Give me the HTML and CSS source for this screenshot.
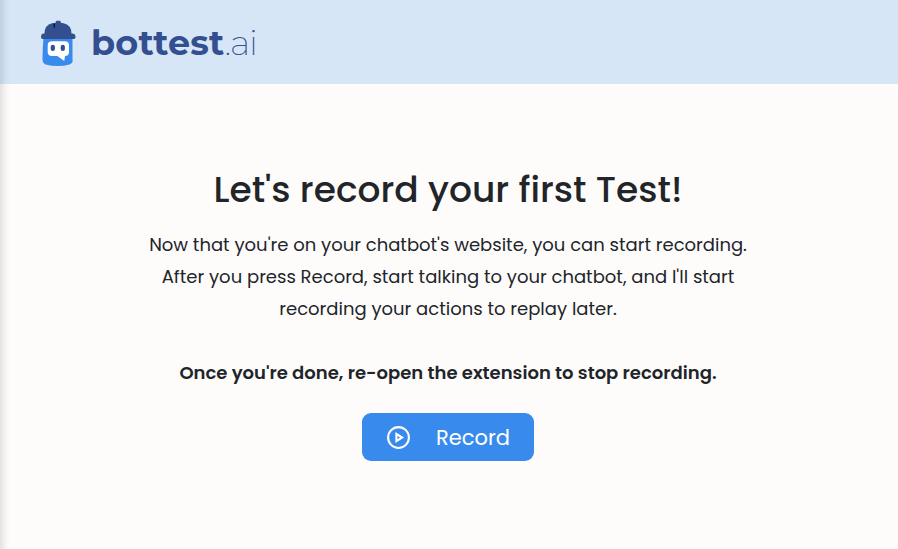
FILE: index.html
```html
<!DOCTYPE html>
<html lang="en">
<head>
<meta charset="utf-8">
<title>bottest.ai</title>
<link rel="stylesheet" href="styles.css">
</head>
<body>
<header class="header">
  <svg class="logo" viewBox="0 0 36 48" aria-hidden="true">
    <path fill="#388bec" d="M3.500 18h29v21q1 4-3 5.500-11 3-24 0-3-1.500-3-5.500 0-11 1-21z"/>
    <path fill="#fff" d="M12 21.300h13q4 0 4 4V32q0 4-4 4l-.7 5-7-5H12q-4.300 0-4.300-4v-6.700q0-4 4.300-4z"/>
    <rect x="10.700" y="24.700" width="4.200" height="6.300" rx="2.100" fill="#334f90"/>
    <rect x="20.700" y="24.700" width="4.200" height="6.300" rx="2.100" fill="#334f90"/>
    <path fill="#334f90" d="M4.500 13.500Q4.500 5 12 3.200l3.700-.5V2q0-1.300 1.300-1.300h2.500q1.300 0 1.300 1.300v.7l2.700.5Q31.500 5 31.500 13.500h1q3 0 3 3.500 0 2-1.500 2H2.500Q1 19 1 17q0-3.500 2.500-3.500z"/>
    <path fill="#06122e" d="M13.500 4l1.500-.5V7l-1 1.500z"/>
  </svg>
  <div class="brand"><span class="brand-name">bottest</span><span class="brand-suffix">.ai</span></div>
</header>
<main class="content">
  <h1 class="title">Let's record your first Test!</h1>
  <p class="text">
    Now that you're on your chatbot's website, you can start recording.<br>
    After you press Record, start talking to your chatbot, and I'll start<br>
    recording your actions to replay later.
  </p>
  <p class="text note">Once you're done, re-open the extension to stop recording.</p>
  <button class="record" type="button">
    <svg class="play" viewBox="0 0 24 24" fill="none" stroke="#fff" stroke-width="2" aria-hidden="true">
      <circle cx="12" cy="12" r="10"/>
      <path d="M10 8.500l5.500 3.500-5.500 3.500z"/>
    </svg>
    <span class="record-label">Record</span>
  </button>
</main>
<div class="edge-shadow"></div>
</body>
</html>
```
FILE: styles.css
```css
* { box-sizing: border-box; }
body {
  margin: 0;
  height: 549px;
  overflow: hidden;
  background: #fefcfb;
  color: #212529;
  font-family: Poppins, Inter, sans-serif;
}
.header {
  display: flex;
  align-items: flex-start;
  height: 84px;
  padding: 20px 0 0 40px;
  background: #d6e6f7;
}
.logo { width: 36px; height: 48px; }
.brand {
  margin: 0 0 0 15px;
  font-family: Montserrat, Lato, sans-serif;
  font-size: 35px;
  line-height: 45px;
  color: #334f90;
  white-space: nowrap;
}
.brand-name { font-weight: 700; letter-spacing: .15px; }
.brand-suffix { font-weight: 250; letter-spacing: -1.4px; }
.content {
  display: flex;
  flex-direction: column;
  align-items: center;
  padding: 82px 0 0;
  white-space: nowrap;
  width: 896px;
}
.title {
  margin: 0;
  font-size: 36px;
  font-weight: 500;
  line-height: 47px;
}
.text {
  margin: 16px 0 0;
  text-align: center;
  font-size: 18px;
  font-weight: 400;
  line-height: 32px;
}
.note {
  margin-top: 32px;
  font-weight: 600;
}
.record {
  display: flex;
  align-items: center;
  gap: 25px;
  width: 172px;
  height: 48px;
  margin-top: 24px;
  padding: 0 0 0 24px;
  border: 0;
  border-radius: 9px;
  background: #388bec;
  color: #fff;
  font: 400 21px/48px Poppins, Inter, sans-serif;
}
.record-label { padding-top: 2px; }
.play { width: 25px; height: 25px; }
.edge-shadow {
  position: absolute;
  top: 0;
  left: 0;
  width: 10px;
  height: 549px;
  background: linear-gradient(90deg, rgba(0, 0, 0, .1), rgba(0, 0, 0, .025) 60%, transparent);
}
```
